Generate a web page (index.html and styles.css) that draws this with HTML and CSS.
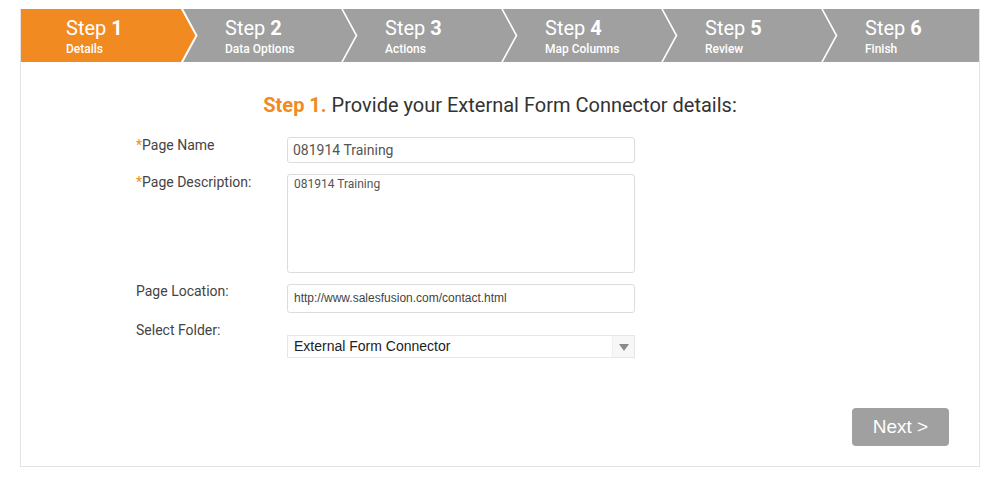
FILE: index.html
```html
<!DOCTYPE html>
<html>
<head>
<meta charset="utf-8">
<link rel="stylesheet" href="styles.css">
</head>
<body>
<div class="card">
  <div class="steps">
    <div class="step active">
      <div class="step-title">Step <b>1</b></div>
      <div class="step-sub">Details</div>
      <svg class="chev" viewBox="0 0 18 53" width="18" height="53"><polygon points="0,0 1.5,0 16.5,26.5 1.5,53 0,53" fill="#f28a22"/><polyline points="1.5,-1 16.5,26.5 1.5,54" fill="none" stroke="#fff" stroke-width="2"/></svg>
    </div>
    <div class="step">
      <div class="step-title">Step <b>2</b></div>
      <div class="step-sub">Data Options</div>
      <svg class="chev" viewBox="0 0 18 53" width="18" height="53"><polyline points="1.5,-1 16.5,26.5 1.5,54" fill="none" stroke="#fff" stroke-width="1.6"/></svg>
    </div>
    <div class="step">
      <div class="step-title">Step <b>3</b></div>
      <div class="step-sub">Actions</div>
      <svg class="chev" viewBox="0 0 18 53" width="18" height="53"><polyline points="1.5,-1 16.5,26.5 1.5,54" fill="none" stroke="#fff" stroke-width="1.6"/></svg>
    </div>
    <div class="step">
      <div class="step-title">Step <b>4</b></div>
      <div class="step-sub">Map Columns</div>
      <svg class="chev" viewBox="0 0 18 53" width="18" height="53"><polyline points="1.5,-1 16.5,26.5 1.5,54" fill="none" stroke="#fff" stroke-width="1.6"/></svg>
    </div>
    <div class="step">
      <div class="step-title">Step <b>5</b></div>
      <div class="step-sub">Review</div>
      <svg class="chev" viewBox="0 0 18 53" width="18" height="53"><polyline points="1.5,-1 16.5,26.5 1.5,54" fill="none" stroke="#fff" stroke-width="1.6"/></svg>
    </div>
    <div class="step last">
      <div class="step-title">Step <b>6</b></div>
      <div class="step-sub">Finish</div>
    </div>
  </div>

  <h1 class="heading"><span class="hl">Step 1.</span> Provide your External Form Connector details:</h1>

  <div class="form">
    <div class="row">
      <div class="lbl"><span class="req">*</span>Page Name</div>
      <div class="field input-name">081914 Training</div>
    </div>
    <div class="row">
      <div class="lbl"><span class="req">*</span>Page Description:</div>
      <div class="field textarea">081914 Training</div>
    </div>
    <div class="row">
      <div class="lbl lbl-tight">Page Location:</div>
      <div class="field input-loc">http://www.salesfusion.com/contact.html</div>
    </div>
    <div class="row">
      <div class="lbl">Select Folder:</div>
      <div class="select">
        <div class="select-text">External Form Connector</div>
        <div class="select-arrow"><svg viewBox="0 0 10 7" width="10" height="7"><polygon points="0,0 10,0 5,7" fill="#8a8a8a"/></svg></div>
      </div>
    </div>
  </div>

  <div class="actions">
    <div class="btn">Next &gt;</div>
  </div>
</div>
</body>
</html>
```

FILE: styles.css
```css
* { box-sizing: border-box; }
html, body { margin: 0; padding: 0; background: #fff; }
body { font-family: Roboto, "Liberation Sans", Arial, sans-serif; }

.card {
  margin: 9px 0 0 20px;
  width: 960px;
  height: 458px;
  border: 1px solid #e3e3e3;
  border-top: 0;
  display: flex;
  flex-direction: column;
}

.steps {
  display: flex;
  height: 53px;
  background: #a0a0a0;
  color: #fff;
}
.step {
  position: relative;
  width: 160px;
  flex: 0 0 160px;
  padding: 8px 0 0 44px;
}
.step.active { background: #f28a22; padding-left: 45px; }
.step.last { flex: 1 1 auto; width: auto; }
.step-title {
  font-size: 20px;
  line-height: 22px;
  font-weight: 400;
}
.step-title b { font-weight: 700; }
.step-sub {
  font-size: 12px;
  line-height: 15px;
  font-weight: 500;
  margin-top: 3px;
}
.chev {
  position: absolute;
  top: 0;
  left: 159px;
  z-index: 2;
  display: block;
}

.heading {
  margin: 31px 0 0;
  text-align: center;
  font-size: 20px;
  line-height: 24px;
  font-weight: 400;
  color: #333;
}
.hl { color: #f28a22; font-weight: 700; }

.form {
  margin: 20px 0 0 115px;
  display: flex;
  flex-direction: column;
  gap: 11px;
}
.row { display: flex; align-items: flex-start; }
.row + .row + .row + .row { margin-top: -2px; }
.lbl {
  width: 151px;
  flex: 0 0 151px;
  font-size: 14px;
  line-height: 16px;
  color: #444;
}
.lbl-tight { line-height: 14px; }
.req { color: #f28a22; }

.field {
  width: 348px;
  border: 1px solid #dcdcdc;
  border-radius: 3px;
  background: #fff;
}
.input-name {
  height: 26px;
  padding: 0 6px 0 5px;
  font-size: 14px;
  line-height: 24px;
  color: #555;
}
.textarea {
  height: 99px;
  padding: 2px 6px;
  font-size: 12px;
  line-height: 14px;
  color: #555;
}
.input-loc {
  height: 29px;
  padding: 0 6px;
  font-family: "Liberation Sans", Arial, sans-serif;
  font-size: 12px;
  line-height: 27px;
  color: #444;
}

.select {
  margin-top: 13px;
  width: 348px;
  height: 23px;
  border: 1px solid #e6e6e6;
  display: flex;
  background: #f7f7f7;
}
.select-text {
  flex: 1 1 auto;
  background: #fff;
  border-right: 1px solid #eeeeee;
  border-radius: 0 3px 3px 0;
  padding: 0 6px;
  font-family: "Liberation Sans", Arial, sans-serif;
  font-size: 14px;
  line-height: 21px;
  color: #222;
}
.select-arrow {
  width: 21px;
  flex: 0 0 21px;
  display: flex;
  align-items: center;
  justify-content: center;
  padding-top: 1px;
}
.select-arrow svg { display: block; }

.actions {
  margin-top: auto;
  margin-bottom: 20px;
  display: flex;
  justify-content: flex-end;
  padding-right: 30px;
}
.btn {
  width: 97px;
  height: 38px;
  border-radius: 4px;
  background: #a0a0a0;
  color: #fff;
  font-family: "Liberation Sans", Arial, sans-serif;
  font-size: 19px;
  line-height: 38px;
  text-align: center;
}
```
